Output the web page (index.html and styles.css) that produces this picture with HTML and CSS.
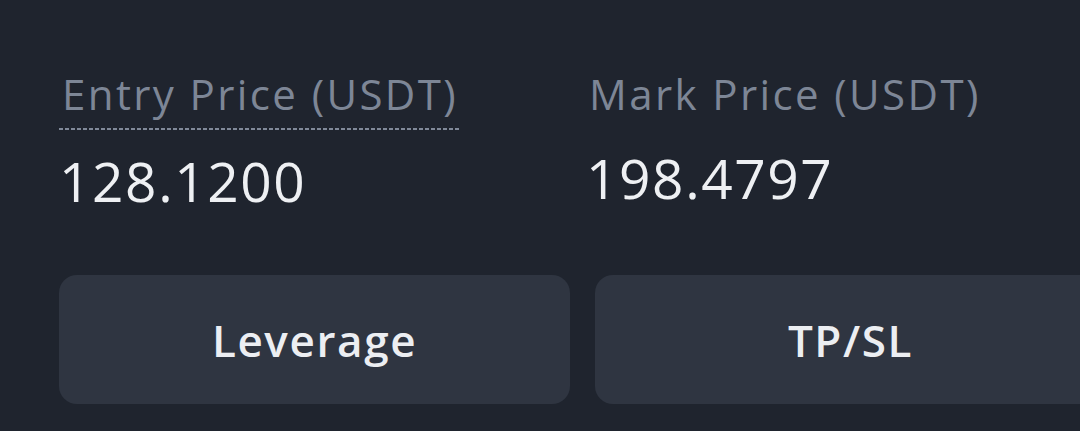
FILE: index.html
```html
<!DOCTYPE html>
<html lang="en">
<head>
  <meta charset="UTF-8">
  <meta name="viewport" content="width=device-width, initial-scale=1.0">
  <title>Position</title>
  <link rel="stylesheet" href="styles.css">
</head>
<body>
  <div class="position">
    <div class="stats">
      <div class="stat">
        <span class="stat-label dotted">Entry Price (USDT)</span>
        <span class="stat-value">128.1200</span>
      </div>
      <div class="stat stat-right">
        <span class="stat-label">Mark Price (USDT)</span>
        <span class="stat-value">198.4797</span>
      </div>
    </div>

    <div class="actions">
      <button class="action-btn">Leverage</button>
      <button class="action-btn">TP/SL</button>
    </div>
  </div>
</body>
</html>
```

FILE: styles.css
```css
body {
  margin: 0;
  padding: 0;
  background-color: #1f242e;
  font-family: "Open Sans", Lato, sans-serif;
}

.position {
  box-sizing: border-box;
  width: 1080px;
  height: 431px;
  padding: 68px 0 0 59px;
  overflow: hidden;
}

.stats {
  display: grid;
  grid-template-columns: 527px 1fr;
}

.stat {
  display: flex;
  flex-direction: column;
  align-items: flex-start;
}

.stat-label {
  font-size: 42px;
  line-height: 52px;
  letter-spacing: 2.4px;
  color: #7d8696;
  padding: 0 1px 10px 3px;
}

/* dotted underline under the entry price label */
.stat-label.dotted {
  background-image: linear-gradient(to right, #808999 60%, transparent 60%);
  background-size: 6px 2px;
  background-repeat: repeat-x;
  background-position: 0 bottom;
}

.stat-value {
  margin-top: 21px;
  font-size: 55px;
  line-height: 60px;
  letter-spacing: 1.6px;
  color: #eef0f3;
}

.stat-right .stat-value {
  margin-top: 18px;
}

.actions {
  display: flex;
  gap: 25px;
  margin-top: 64px;
}

.action-btn {
  flex: 0 0 511px;
  height: 129px;
  border: none;
  border-radius: 18px;
  background: #2f3541;
  color: #eceef2;
  font-family: inherit;
  font-size: 44px;
  font-weight: 600;
  letter-spacing: 1.6px;
  cursor: pointer;
}
```
